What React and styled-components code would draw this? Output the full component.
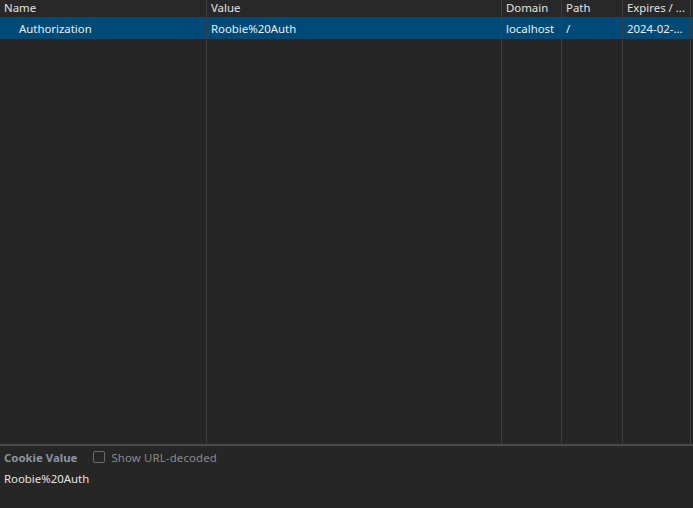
import React from "react";
import styled, { createGlobalStyle } from "styled-components";

const Global = createGlobalStyle`
  html, body { margin: 0; padding: 0; background: #262626; }
  body { font-family: "Segoe UI", "Noto Sans", "Open Sans", sans-serif; font-size: 11.4px; color: #e3e3e3; }
  * { box-sizing: border-box; }
`;

const Page = styled.div`
  width: 693px;
  height: 508px;
  display: flex;
  flex-direction: column;
  background: #262626;
  overflow: hidden;
`;

const Grid = styled.div`
  flex: 0 0 444px;
  display: grid;
  grid-template-columns: 207px 295px 60px 61px 68px 2px;
  grid-template-rows: 18px 21px 1fr;
`;

const HeadCell = styled.div`
  height: 18px;
  padding: 0 4px;
  line-height: 16px;
  background: #282828;
  border-bottom: 1px solid #3d3d3d;
  border-right: ${(p) => (p.$last ? "none" : "1px solid #3d3d3d")};
  color: #e3e3e3;
  white-space: nowrap;
  overflow: hidden;
  text-overflow: ellipsis;
`;

const Cell = styled.div`
  height: 21px;
  line-height: 21px;
  padding: 0 4px;
  padding-left: ${(p) => p.$indent || "4px"};
  background: #004a77;
  border-right: ${(p) => (p.$last ? "none" : "1px solid #3d3d3d")};
  color: #e8eef3;
  white-space: nowrap;
  overflow: hidden;
  text-overflow: ellipsis;
`;

const FillCol = styled.div`
  border-right: ${(p) => (p.$last ? "none" : "1px solid #3d3d3d")};
`;

const Footer = styled.div`
  flex: 1;
  border-top: 2px solid #4a4a4a;
  padding: 3px 4px;
  display: flex;
  flex-direction: column;
  gap: 6px;
`;

const FooterBar = styled.div`
  display: flex;
  align-items: center;
  height: 16px;
`;

const Label = styled.span`
  font-weight: 700;
  color: #8b949e;
  margin-right: 16px;
`;

const Check = styled.span`
  width: 12px;
  height: 12px;
  border: 1px solid #6b6b6b;
  border-radius: 2px;
  margin-right: 6px;
  display: inline-block;
`;

const CheckText = styled.span`
  color: #8a8a8a;
  letter-spacing: 0.15px;
`;

const ValueText = styled.div`
  color: #e3e3e3;
  line-height: 16px;
`;

const columns = ["Name", "Value", "Domain", "Path", "Expires / ..."];

export default function App() {
  return (
    <Page>
      <Global />
      <Grid>
        {columns.map((c) => (
          <HeadCell key={c}>{c}</HeadCell>
        ))}
        <HeadCell $last />
        <Cell $indent="19px">Authorization</Cell>
        <Cell>Roobie%20Auth</Cell>
        <Cell>localhost</Cell>
        <Cell>/</Cell>
        <Cell>2024-02-...</Cell>
        <Cell $last />
        <FillCol />
        <FillCol />
        <FillCol />
        <FillCol />
        <FillCol />
        <FillCol $last />
      </Grid>
      <Footer>
        <FooterBar>
          <Label>Cookie Value</Label>
          <Check />
          <CheckText>Show URL-decoded</CheckText>
        </FooterBar>
        <ValueText>Roobie%20Auth</ValueText>
      </Footer>
    </Page>
  );
}
